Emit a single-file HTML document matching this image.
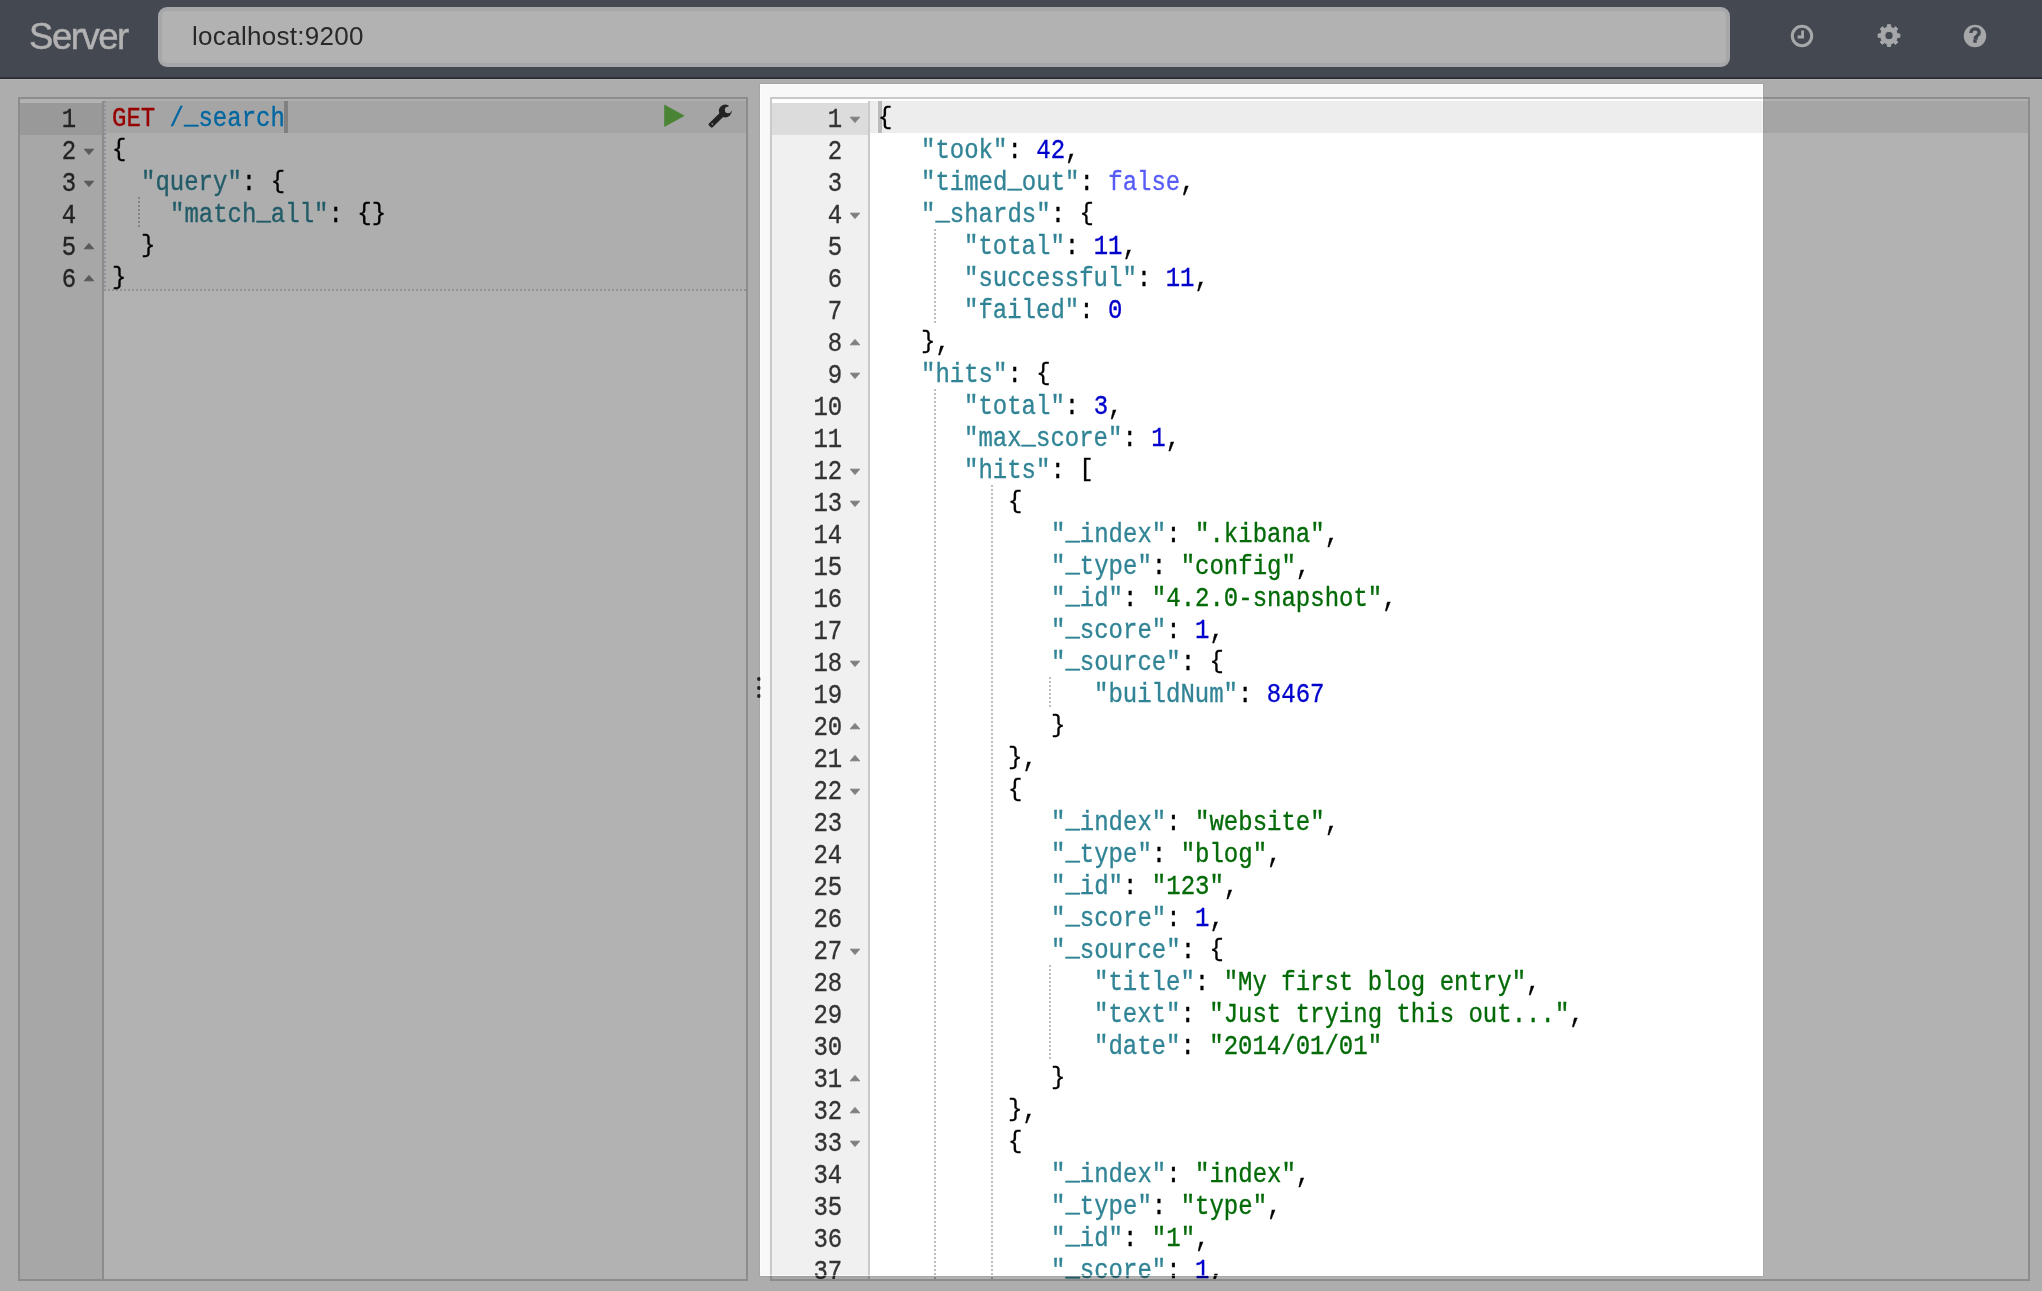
<!DOCTYPE html>
<html><head><meta charset="utf-8"><title>Sense</title>
<style>
html,body{margin:0;padding:0}
body{width:2042px;height:1291px;overflow:hidden;background:#f8f8f8;position:relative;font-family:"Liberation Sans",sans-serif}
.abs,.ln,.gn,.ig,.fw{position:absolute}
#nav{left:0;top:0;width:2042px;height:77px;background:#626775;border-bottom:2px solid #373b49}
#navmid{left:0;top:77px;width:2042px;height:1px;background:#474b5a}
#navhl{left:0;top:79px;width:2042px;height:1px;background:#fff}
#brand{left:29px;top:15px;font-size:36.5px;line-height:44px;color:#fff;letter-spacing:-1.45px;white-space:pre;-webkit-text-stroke:0.4px #fff}
#inp{left:158px;top:7px;width:1564px;height:52px;border:4px solid #ecf0f1;border-radius:9px;background:#fff}
#inptxt{left:191.5px;top:16px;font-size:26px;line-height:40px;color:#3a3a3a;letter-spacing:0.3px;white-space:pre;will-change:transform}
.ed{background:#fff;border:2px solid #c9c9c9;box-sizing:border-box}
.gut{background:#f0f0f0}
.gal{background:#dcdcdc}
.gb{background:#c9c9c9}
.al{background:#ededed}
.ln,.gn{font-family:"Liberation Mono",monospace;font-size:27.0px;line-height:32px;height:32px;white-space:pre;transform:scaleX(0.8889);transform-origin:0 0;color:#000;-webkit-text-stroke:0.35px currentColor}
.gn{color:#333;width:48.60px;text-align:right}
.ln i{font-style:normal;position:relative;top:-3px}
.ln b{font-weight:normal;display:inline-block;transform:scaleY(0.89);transform-origin:0 3px}
.k{color:#318495}.s{color:#036a07}.n{color:#0000cd}.b{color:#585cf6}.m{color:#d80000}.u{color:#0093e6}
.ig{width:2px;height:32px;background:repeating-linear-gradient(to bottom,#bdbdbd 0,#bdbdbd 2px,transparent 2px,transparent 4px)}
#wrap{position:absolute;left:0;top:0;width:2042px;height:1291px;will-change:transform}
#spot{left:760px;top:84px;width:1003px;height:1192px;box-shadow:inset 0 0 0 1px rgba(255,255,255,0.55),0 0 0 1px rgba(0,0,0,0.05),0 0 0 4000px rgba(0,0,0,0.3);pointer-events:none}
</style></head>
<body>
<div id="wrap">
<div id="nav" class="abs"></div><div id="navmid" class="abs"></div><div id="navhl" class="abs"></div>
<div id="brand" class="abs">Server</div>
<div id="inp" class="abs"></div><div id="inptxt" class="abs">localhost:9200</div>
<svg class="abs" style="left:1790px;top:23.6px" width="24" height="24" viewBox="0 0 24 24"><circle cx="12" cy="12" r="9.7" fill="none" stroke="#ecf0f1" stroke-width="3"/><path d="M12.6 6.5 V13 H7.6" fill="none" stroke="#ecf0f1" stroke-width="2.8"/></svg>
<svg class="abs" style="left:1876px;top:23px" width="26" height="26" viewBox="0 0 26 26"><path d="M21.31 10.81 L23.88 10.96 L23.88 14.24 L21.31 14.39 L20.14 17.21 L21.85 19.14 L19.54 21.45 L17.61 19.74 L14.79 20.91 L14.64 23.48 L11.36 23.48 L11.21 20.91 L8.39 19.74 L6.46 21.45 L4.15 19.14 L5.86 17.21 L4.69 14.39 L2.12 14.24 L2.12 10.96 L4.69 10.81 L5.86 7.99 L4.15 6.06 L6.46 3.75 L8.39 5.46 L11.21 4.29 L11.36 1.72 L14.64 1.72 L14.79 4.29 L17.61 5.46 L19.54 3.75 L21.85 6.06 L20.14 7.99 Z M8.90 12.60 a4.10 4.10 0 1 0 8.20 0 a4.10 4.10 0 1 0 -8.20 0 Z" fill="#ecf0f1" fill-rule="evenodd" stroke="#ecf0f1" stroke-width="1" stroke-linejoin="round"/></svg>
<svg class="abs" style="left:1963px;top:24px" width="24" height="24" viewBox="0 0 24 24"><circle cx="12" cy="12" r="11.2" fill="#ecf0f1"/><path d="M7.9 9.0 C7.9 6.2 9.8 4.9 12.1 4.9 C14.5 4.9 16.2 6.3 16.2 8.4 C16.2 11.2 13.0 11.3 13.0 14.0 L10.7 14.0" fill="none" stroke="#626775" stroke-width="3.4"/><rect x="10.3" y="15.6" width="3.4" height="3.2" fill="#626775"/></svg>
<div class="abs ed" style="left:18px;top:97px;width:730px;height:1184px"></div>
<div class="abs gut" style="left:20px;top:103px;width:82px;height:1176px"></div>
<div class="abs gal" style="left:20px;top:103px;width:82px;height:32px"></div>
<div class="abs gb" style="left:102px;top:101px;width:2px;height:1178px"></div>
<div class="abs" style="left:104px;top:99px;width:642px;height:190px;background:rgba(194,193,208,0.09)"></div>
<div class="abs al" style="left:104px;top:101px;width:642px;height:32px"></div>
<div class="abs" style="left:104px;top:101px;width:2px;height:190px;background:repeating-linear-gradient(to bottom,#cfcedb 0,#cfcedb 2px,transparent 2px,transparent 4px)"></div>
<div class="abs" style="left:104px;top:289px;width:642px;height:2px;background:repeating-linear-gradient(to right,#cfcedb 0,#cfcedb 2px,transparent 2px,transparent 4px)"></div>
<div class="gn" style="left:33.0px;top:104.00px">1</div>
<div class="gn" style="left:33.0px;top:136.00px">2</div>
<svg class="fw" style="left:83.2px;top:148px" width="12" height="8" viewBox="0 0 12 8"><path d="M1.3 1.2 L10.7 1.2 L6 6.6 Z" fill="#808080" stroke="#808080" stroke-width="1" stroke-linejoin="round"/></svg>
<div class="gn" style="left:33.0px;top:168.00px">3</div>
<svg class="fw" style="left:83.2px;top:180px" width="12" height="8" viewBox="0 0 12 8"><path d="M1.3 1.2 L10.7 1.2 L6 6.6 Z" fill="#808080" stroke="#808080" stroke-width="1" stroke-linejoin="round"/></svg>
<div class="gn" style="left:33.0px;top:200.00px">4</div>
<div class="gn" style="left:33.0px;top:232.00px">5</div>
<svg class="fw" style="left:83.2px;top:242px" width="12" height="8" viewBox="0 0 12 8"><path d="M1.3 6.8 L10.7 6.8 L6 1.4 Z" fill="#808080" stroke="#808080" stroke-width="1" stroke-linejoin="round"/></svg>
<div class="gn" style="left:33.0px;top:264.00px">6</div>
<svg class="fw" style="left:83.2px;top:274px" width="12" height="8" viewBox="0 0 12 8"><path d="M1.3 6.8 L10.7 6.8 L6 1.4 Z" fill="#808080" stroke="#808080" stroke-width="1" stroke-linejoin="round"/></svg>
<div class="ln" style="left:112.0px;top:103.00px"><span class="m">GET</span> <span class="u">/<i>_</i>search</span></div>
<div class="ln" style="left:112.0px;top:135.00px"><b>{</b></div>
<div class="ln" style="left:140.8px;top:167.00px"><span class="k">"query"</span>: <b>{</b></div>
<div class="ln" style="left:169.6px;top:199.00px"><span class="k">"match<i>_</i>all"</span>: <b>{</b><b>}</b></div>
<div class="ig" style="left:137.8px;top:197px"></div>
<div class="ln" style="left:140.8px;top:231.00px"><b>}</b></div>
<div class="ln" style="left:112.0px;top:263.00px"><b>}</b></div>
<div class="abs" style="left:284px;top:101px;width:4px;height:32px;background:#b8b8b8"></div>
<svg class="abs" style="left:663px;top:103px" width="24" height="26" viewBox="0 0 24 26"><path d="M1.2 1.6 L21.8 12.8 L1.2 24 Z" fill="#6abe4d"/></svg>
<svg class="abs" style="left:700px;top:98px" width="40" height="38" viewBox="0 0 40 38"><defs><mask id="wm" maskUnits="userSpaceOnUse" x="0" y="0" width="40" height="38"><rect x="0" y="0" width="40" height="38" fill="#fff"/><circle cx="28.10" cy="11.90" r="3.25" fill="#000"/><rect x="28.10" y="9.20" width="12" height="5.4" fill="#000" transform="rotate(-35 28.10 11.90)"/><circle cx="12.30" cy="26.00" r="0.8" fill="#000"/></mask></defs><g mask="url(#wm)" fill="#333"><circle cx="25.30" cy="13.00" r="6.45"/><polygon points="21.05,15.35 9.86,26.53 11.77,28.44 22.95,17.25" stroke="#333" stroke-width="2.60" stroke-linejoin="round"/></g></svg>
<div class="abs" style="left:757px;top:676.6px;width:4px;height:4px;border-radius:2px;background:#333"></div>
<div class="abs" style="left:757px;top:685.5px;width:4px;height:4px;border-radius:2px;background:#333"></div>
<div class="abs" style="left:757px;top:694.1px;width:4px;height:4px;border-radius:2px;background:#333"></div>
<div class="abs ed" style="left:770px;top:97px;width:1260px;height:1184px"></div>
<div class="abs gut" style="left:772px;top:103px;width:96px;height:1176px"></div>
<div class="abs gal" style="left:772px;top:103px;width:96px;height:32px"></div>
<div class="abs gb" style="left:868px;top:101px;width:2px;height:1178px"></div>
<div class="abs al" style="left:870px;top:101px;width:1158px;height:32px"></div>
<div class="abs" style="left:878px;top:101px;width:4px;height:32px;background:#bbb"></div>
<div class="abs" style="left:772px;top:99px;width:1256px;height:1180px;overflow:hidden"><div class="abs" style="left:-772px;top:-99px;width:2042px;height:1291px">
<div class="gn" style="left:799.0px;top:104.00px">1</div>
<svg class="fw" style="left:849.2px;top:116px" width="12" height="8" viewBox="0 0 12 8"><path d="M1.3 1.2 L10.7 1.2 L6 6.6 Z" fill="#808080" stroke="#808080" stroke-width="1" stroke-linejoin="round"/></svg>
<div class="gn" style="left:799.0px;top:136.00px">2</div>
<div class="gn" style="left:799.0px;top:168.00px">3</div>
<div class="gn" style="left:799.0px;top:200.00px">4</div>
<svg class="fw" style="left:849.2px;top:212px" width="12" height="8" viewBox="0 0 12 8"><path d="M1.3 1.2 L10.7 1.2 L6 6.6 Z" fill="#808080" stroke="#808080" stroke-width="1" stroke-linejoin="round"/></svg>
<div class="gn" style="left:799.0px;top:232.00px">5</div>
<div class="gn" style="left:799.0px;top:264.00px">6</div>
<div class="gn" style="left:799.0px;top:296.00px">7</div>
<div class="gn" style="left:799.0px;top:328.00px">8</div>
<svg class="fw" style="left:849.2px;top:338px" width="12" height="8" viewBox="0 0 12 8"><path d="M1.3 6.8 L10.7 6.8 L6 1.4 Z" fill="#808080" stroke="#808080" stroke-width="1" stroke-linejoin="round"/></svg>
<div class="gn" style="left:799.0px;top:360.00px">9</div>
<svg class="fw" style="left:849.2px;top:372px" width="12" height="8" viewBox="0 0 12 8"><path d="M1.3 1.2 L10.7 1.2 L6 6.6 Z" fill="#808080" stroke="#808080" stroke-width="1" stroke-linejoin="round"/></svg>
<div class="gn" style="left:799.0px;top:392.00px">10</div>
<div class="gn" style="left:799.0px;top:424.00px">11</div>
<div class="gn" style="left:799.0px;top:456.00px">12</div>
<svg class="fw" style="left:849.2px;top:468px" width="12" height="8" viewBox="0 0 12 8"><path d="M1.3 1.2 L10.7 1.2 L6 6.6 Z" fill="#808080" stroke="#808080" stroke-width="1" stroke-linejoin="round"/></svg>
<div class="gn" style="left:799.0px;top:488.00px">13</div>
<svg class="fw" style="left:849.2px;top:500px" width="12" height="8" viewBox="0 0 12 8"><path d="M1.3 1.2 L10.7 1.2 L6 6.6 Z" fill="#808080" stroke="#808080" stroke-width="1" stroke-linejoin="round"/></svg>
<div class="gn" style="left:799.0px;top:520.00px">14</div>
<div class="gn" style="left:799.0px;top:552.00px">15</div>
<div class="gn" style="left:799.0px;top:584.00px">16</div>
<div class="gn" style="left:799.0px;top:616.00px">17</div>
<div class="gn" style="left:799.0px;top:648.00px">18</div>
<svg class="fw" style="left:849.2px;top:660px" width="12" height="8" viewBox="0 0 12 8"><path d="M1.3 1.2 L10.7 1.2 L6 6.6 Z" fill="#808080" stroke="#808080" stroke-width="1" stroke-linejoin="round"/></svg>
<div class="gn" style="left:799.0px;top:680.00px">19</div>
<div class="gn" style="left:799.0px;top:712.00px">20</div>
<svg class="fw" style="left:849.2px;top:722px" width="12" height="8" viewBox="0 0 12 8"><path d="M1.3 6.8 L10.7 6.8 L6 1.4 Z" fill="#808080" stroke="#808080" stroke-width="1" stroke-linejoin="round"/></svg>
<div class="gn" style="left:799.0px;top:744.00px">21</div>
<svg class="fw" style="left:849.2px;top:754px" width="12" height="8" viewBox="0 0 12 8"><path d="M1.3 6.8 L10.7 6.8 L6 1.4 Z" fill="#808080" stroke="#808080" stroke-width="1" stroke-linejoin="round"/></svg>
<div class="gn" style="left:799.0px;top:776.00px">22</div>
<svg class="fw" style="left:849.2px;top:788px" width="12" height="8" viewBox="0 0 12 8"><path d="M1.3 1.2 L10.7 1.2 L6 6.6 Z" fill="#808080" stroke="#808080" stroke-width="1" stroke-linejoin="round"/></svg>
<div class="gn" style="left:799.0px;top:808.00px">23</div>
<div class="gn" style="left:799.0px;top:840.00px">24</div>
<div class="gn" style="left:799.0px;top:872.00px">25</div>
<div class="gn" style="left:799.0px;top:904.00px">26</div>
<div class="gn" style="left:799.0px;top:936.00px">27</div>
<svg class="fw" style="left:849.2px;top:948px" width="12" height="8" viewBox="0 0 12 8"><path d="M1.3 1.2 L10.7 1.2 L6 6.6 Z" fill="#808080" stroke="#808080" stroke-width="1" stroke-linejoin="round"/></svg>
<div class="gn" style="left:799.0px;top:968.00px">28</div>
<div class="gn" style="left:799.0px;top:1000.00px">29</div>
<div class="gn" style="left:799.0px;top:1032.00px">30</div>
<div class="gn" style="left:799.0px;top:1064.00px">31</div>
<svg class="fw" style="left:849.2px;top:1074px" width="12" height="8" viewBox="0 0 12 8"><path d="M1.3 6.8 L10.7 6.8 L6 1.4 Z" fill="#808080" stroke="#808080" stroke-width="1" stroke-linejoin="round"/></svg>
<div class="gn" style="left:799.0px;top:1096.00px">32</div>
<svg class="fw" style="left:849.2px;top:1106px" width="12" height="8" viewBox="0 0 12 8"><path d="M1.3 6.8 L10.7 6.8 L6 1.4 Z" fill="#808080" stroke="#808080" stroke-width="1" stroke-linejoin="round"/></svg>
<div class="gn" style="left:799.0px;top:1128.00px">33</div>
<svg class="fw" style="left:849.2px;top:1140px" width="12" height="8" viewBox="0 0 12 8"><path d="M1.3 1.2 L10.7 1.2 L6 6.6 Z" fill="#808080" stroke="#808080" stroke-width="1" stroke-linejoin="round"/></svg>
<div class="gn" style="left:799.0px;top:1160.00px">34</div>
<div class="gn" style="left:799.0px;top:1192.00px">35</div>
<div class="gn" style="left:799.0px;top:1224.00px">36</div>
<div class="gn" style="left:799.0px;top:1256.00px">37</div>
<div class="gn" style="left:799.0px;top:1288.00px">38</div>
<svg class="fw" style="left:849.2px;top:1300px" width="12" height="8" viewBox="0 0 12 8"><path d="M1.3 1.2 L10.7 1.2 L6 6.6 Z" fill="#808080" stroke="#808080" stroke-width="1" stroke-linejoin="round"/></svg>
<div class="ln" style="left:878.0px;top:103.00px"><b>{</b></div>
<div class="ln" style="left:921.2px;top:135.00px"><span class="k">"took"</span>: <span class="n">42</span>,</div>
<div class="ln" style="left:921.2px;top:167.00px"><span class="k">"timed<i>_</i>out"</span>: <span class="b">false</span>,</div>
<div class="ln" style="left:921.2px;top:199.00px"><span class="k">"<i>_</i>shards"</span>: <b>{</b></div>
<div class="ln" style="left:964.4px;top:231.00px"><span class="k">"total"</span>: <span class="n">11</span>,</div>
<div class="ig" style="left:933.6px;top:229px"></div>
<div class="ln" style="left:964.4px;top:263.00px"><span class="k">"successful"</span>: <span class="n">11</span>,</div>
<div class="ig" style="left:933.6px;top:261px"></div>
<div class="ln" style="left:964.4px;top:295.00px"><span class="k">"failed"</span>: <span class="n">0</span></div>
<div class="ig" style="left:933.6px;top:293px"></div>
<div class="ln" style="left:921.2px;top:327.00px"><b>}</b>,</div>
<div class="ln" style="left:921.2px;top:359.00px"><span class="k">"hits"</span>: <b>{</b></div>
<div class="ln" style="left:964.4px;top:391.00px"><span class="k">"total"</span>: <span class="n">3</span>,</div>
<div class="ig" style="left:933.6px;top:389px"></div>
<div class="ln" style="left:964.4px;top:423.00px"><span class="k">"max<i>_</i>score"</span>: <span class="n">1</span>,</div>
<div class="ig" style="left:933.6px;top:421px"></div>
<div class="ln" style="left:964.4px;top:455.00px"><span class="k">"hits"</span>: <b>[</b></div>
<div class="ig" style="left:933.6px;top:453px"></div>
<div class="ln" style="left:1007.6px;top:487.00px"><b>{</b></div>
<div class="ig" style="left:933.6px;top:485px"></div>
<div class="ig" style="left:991.2px;top:485px"></div>
<div class="ln" style="left:1050.8px;top:519.00px"><span class="k">"<i>_</i>index"</span>: <span class="s">".kibana"</span>,</div>
<div class="ig" style="left:933.6px;top:517px"></div>
<div class="ig" style="left:991.2px;top:517px"></div>
<div class="ln" style="left:1050.8px;top:551.00px"><span class="k">"<i>_</i>type"</span>: <span class="s">"config"</span>,</div>
<div class="ig" style="left:933.6px;top:549px"></div>
<div class="ig" style="left:991.2px;top:549px"></div>
<div class="ln" style="left:1050.8px;top:583.00px"><span class="k">"<i>_</i>id"</span>: <span class="s">"4.2.0-snapshot"</span>,</div>
<div class="ig" style="left:933.6px;top:581px"></div>
<div class="ig" style="left:991.2px;top:581px"></div>
<div class="ln" style="left:1050.8px;top:615.00px"><span class="k">"<i>_</i>score"</span>: <span class="n">1</span>,</div>
<div class="ig" style="left:933.6px;top:613px"></div>
<div class="ig" style="left:991.2px;top:613px"></div>
<div class="ln" style="left:1050.8px;top:647.00px"><span class="k">"<i>_</i>source"</span>: <b>{</b></div>
<div class="ig" style="left:933.6px;top:645px"></div>
<div class="ig" style="left:991.2px;top:645px"></div>
<div class="ln" style="left:1094.0px;top:679.00px"><span class="k">"buildNum"</span>: <span class="n">8467</span></div>
<div class="ig" style="left:933.6px;top:677px"></div>
<div class="ig" style="left:991.2px;top:677px"></div>
<div class="ig" style="left:1048.8px;top:677px"></div>
<div class="ln" style="left:1050.8px;top:711.00px"><b>}</b></div>
<div class="ig" style="left:933.6px;top:709px"></div>
<div class="ig" style="left:991.2px;top:709px"></div>
<div class="ln" style="left:1007.6px;top:743.00px"><b>}</b>,</div>
<div class="ig" style="left:933.6px;top:741px"></div>
<div class="ig" style="left:991.2px;top:741px"></div>
<div class="ln" style="left:1007.6px;top:775.00px"><b>{</b></div>
<div class="ig" style="left:933.6px;top:773px"></div>
<div class="ig" style="left:991.2px;top:773px"></div>
<div class="ln" style="left:1050.8px;top:807.00px"><span class="k">"<i>_</i>index"</span>: <span class="s">"website"</span>,</div>
<div class="ig" style="left:933.6px;top:805px"></div>
<div class="ig" style="left:991.2px;top:805px"></div>
<div class="ln" style="left:1050.8px;top:839.00px"><span class="k">"<i>_</i>type"</span>: <span class="s">"blog"</span>,</div>
<div class="ig" style="left:933.6px;top:837px"></div>
<div class="ig" style="left:991.2px;top:837px"></div>
<div class="ln" style="left:1050.8px;top:871.00px"><span class="k">"<i>_</i>id"</span>: <span class="s">"123"</span>,</div>
<div class="ig" style="left:933.6px;top:869px"></div>
<div class="ig" style="left:991.2px;top:869px"></div>
<div class="ln" style="left:1050.8px;top:903.00px"><span class="k">"<i>_</i>score"</span>: <span class="n">1</span>,</div>
<div class="ig" style="left:933.6px;top:901px"></div>
<div class="ig" style="left:991.2px;top:901px"></div>
<div class="ln" style="left:1050.8px;top:935.00px"><span class="k">"<i>_</i>source"</span>: <b>{</b></div>
<div class="ig" style="left:933.6px;top:933px"></div>
<div class="ig" style="left:991.2px;top:933px"></div>
<div class="ln" style="left:1094.0px;top:967.00px"><span class="k">"title"</span>: <span class="s">"My first blog entry"</span>,</div>
<div class="ig" style="left:933.6px;top:965px"></div>
<div class="ig" style="left:991.2px;top:965px"></div>
<div class="ig" style="left:1048.8px;top:965px"></div>
<div class="ln" style="left:1094.0px;top:999.00px"><span class="k">"text"</span>: <span class="s">"Just trying this out..."</span>,</div>
<div class="ig" style="left:933.6px;top:997px"></div>
<div class="ig" style="left:991.2px;top:997px"></div>
<div class="ig" style="left:1048.8px;top:997px"></div>
<div class="ln" style="left:1094.0px;top:1031.00px"><span class="k">"date"</span>: <span class="s">"2014/01/01"</span></div>
<div class="ig" style="left:933.6px;top:1029px"></div>
<div class="ig" style="left:991.2px;top:1029px"></div>
<div class="ig" style="left:1048.8px;top:1029px"></div>
<div class="ln" style="left:1050.8px;top:1063.00px"><b>}</b></div>
<div class="ig" style="left:933.6px;top:1061px"></div>
<div class="ig" style="left:991.2px;top:1061px"></div>
<div class="ln" style="left:1007.6px;top:1095.00px"><b>}</b>,</div>
<div class="ig" style="left:933.6px;top:1093px"></div>
<div class="ig" style="left:991.2px;top:1093px"></div>
<div class="ln" style="left:1007.6px;top:1127.00px"><b>{</b></div>
<div class="ig" style="left:933.6px;top:1125px"></div>
<div class="ig" style="left:991.2px;top:1125px"></div>
<div class="ln" style="left:1050.8px;top:1159.00px"><span class="k">"<i>_</i>index"</span>: <span class="s">"index"</span>,</div>
<div class="ig" style="left:933.6px;top:1157px"></div>
<div class="ig" style="left:991.2px;top:1157px"></div>
<div class="ln" style="left:1050.8px;top:1191.00px"><span class="k">"<i>_</i>type"</span>: <span class="s">"type"</span>,</div>
<div class="ig" style="left:933.6px;top:1189px"></div>
<div class="ig" style="left:991.2px;top:1189px"></div>
<div class="ln" style="left:1050.8px;top:1223.00px"><span class="k">"<i>_</i>id"</span>: <span class="s">"1"</span>,</div>
<div class="ig" style="left:933.6px;top:1221px"></div>
<div class="ig" style="left:991.2px;top:1221px"></div>
<div class="ln" style="left:1050.8px;top:1255.00px"><span class="k">"<i>_</i>score"</span>: <span class="n">1</span>,</div>
<div class="ig" style="left:933.6px;top:1253px"></div>
<div class="ig" style="left:991.2px;top:1253px"></div>
<div class="ln" style="left:1050.8px;top:1287.00px"><span class="k">"<i>_</i>source"</span>: <b>{</b></div>
<div class="ig" style="left:933.6px;top:1285px"></div>
<div class="ig" style="left:991.2px;top:1285px"></div>
</div></div>
<div id="spot" class="abs"></div>
</div>
</body></html>
